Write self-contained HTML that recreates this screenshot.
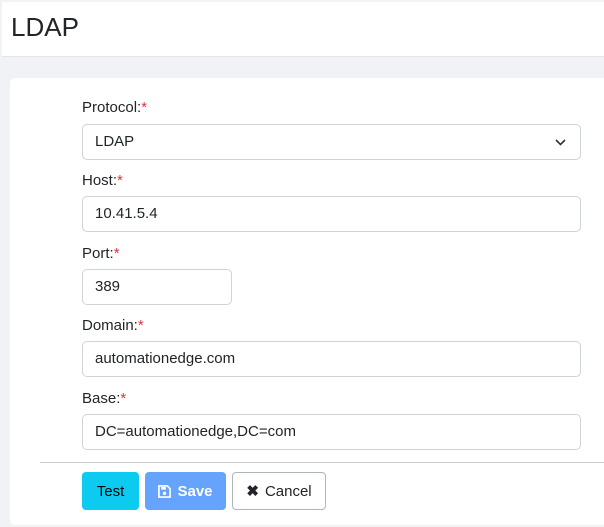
<!DOCTYPE html>
<html><head><style>
*{box-sizing:border-box;margin:0;padding:0}
body{width:604px;height:527px;background:#f1f2f5;font-family:"Liberation Sans",sans-serif;position:relative;overflow:hidden;color:#212529}
.hdr{position:absolute;left:2px;top:2px;width:602px;height:55px;background:#fff;border-bottom:1px solid #e4e5e8}
.hdr h1{font-weight:400;font-size:26px;position:absolute;left:9px;top:10px}
.card{position:absolute;left:10px;top:78px;width:600px;height:447px;background:#fff;border-radius:5px}
.lbl{position:absolute;left:82px;font-size:15px;color:#212529}
.lbl span{color:#dc3545}
.inp{position:absolute;left:82px;width:499px;height:36px;border:1px solid #ced4da;border-radius:5px;font-size:15px;padding:8px 12px;background:#fff}
hr{position:absolute;left:40px;top:462px;width:564px;border:0;border-top:1px solid #ccc}
.btn{position:absolute;top:472px;height:38px;border-radius:4px;font-size:15px;display:flex;align-items:center;justify-content:center}
</style></head><body>
<div class="hdr"><h1>LDAP</h1></div>
<div class="card"></div>
<div class="lbl" style="top:99px">Protocol:<span>*</span></div>
<div class="inp" style="top:124px">LDAP<svg style="position:absolute;right:14px;top:14px" width="11" height="7" viewBox="0 0 11 7"><path d="M1 1l4.5 4.5L10 1" fill="none" stroke="#333" stroke-width="1.6"/></svg></div>
<div class="lbl" style="top:172px">Host:<span>*</span></div>
<div class="inp" style="top:196px">10.41.5.4</div>
<div class="lbl" style="top:245px">Port:<span>*</span></div>
<div class="inp" style="top:269px;width:150px">389</div>
<div class="lbl" style="top:317px">Domain:<span>*</span></div>
<div class="inp" style="top:341px">automationedge.com</div>
<div class="lbl" style="top:390px">Base:<span>*</span></div>
<div class="inp" style="top:414px">DC=automationedge,DC=com</div>
<hr>
<div class="btn" style="left:82px;width:57px;background:#0dcaf0;color:#000">Test</div>
<div class="btn" style="left:145px;width:81px;background:#65a3fd;color:#fff;font-weight:bold"><svg width="13" height="13" viewBox="0 0 14 14" style="margin-right:6px"><path d="M1 1h9l3 3v9H1z" fill="none" stroke="#fff" stroke-width="1.8"/><rect x="3.5" y="2" width="5" height="3" fill="#fff"/><circle cx="7" cy="9" r="1.8" fill="#fff"/></svg>Save</div>
<div class="btn" style="left:232px;width:94px;border:1px solid #adb5bd;background:#fff;color:#212529"><span style="font-weight:bold;margin-right:6px">✖</span>Cancel</div>
</body></html>
